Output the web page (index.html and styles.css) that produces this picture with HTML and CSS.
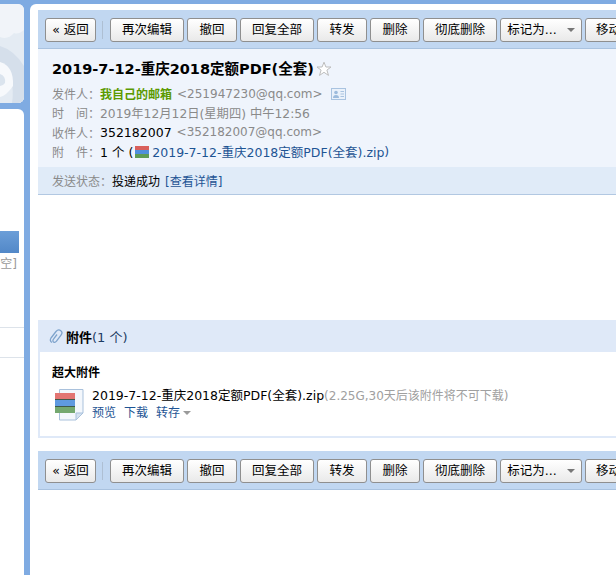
FILE: index.html
```html
<!DOCTYPE html>
<html lang="zh">
<head>
<meta charset="utf-8">
<title>邮件</title>
<link rel="stylesheet" href="styles.css">
</head>
<body>
<div class="app">
  <aside class="side">
    <div class="side-top">
      <svg class="swirl" viewBox="0 0 24 99" width="24" height="99" aria-hidden="true">
        <rect width="24" height="99" fill="#f1f4f9"/>
        <path d="M0 33 Q8 36 14 29 Q18 31 24 26 L24 99 L0 99Z" fill="#e4ebf3"/>
        <path d="M0 42 Q14 46 24 62 L24 99 L12 99 Q16 74 0 58Z" fill="#d5dfeb"/>
        <path d="M0 58 Q14 62 13 82 Q6 92 0 93Z" fill="#f7f9fc"/>
        <path d="M0 70 Q6 72 5 79 Q3 82 0 82Z" fill="#dbe4ee"/>
      </svg>
    </div>
    <div class="side-main">
      <div class="side-active"></div>
      <div class="side-clear">[清空]</div>
      <div class="side-line first"></div>
      <div class="side-line"></div>
    </div>
  </aside>
  <main class="main">
    <div class="toolbar">
      <button class="btn back">« 返回</button>
      <span class="sep"></span>
      <button class="btn w74">再次编辑</button>
      <button class="btn w50">撤回</button>
      <button class="btn w74">回复全部</button>
      <button class="btn w50">转发</button>
      <button class="btn w50">删除</button>
      <button class="btn w74">彻底删除</button>
      <button class="btn mark">标记为...<i class="caret"></i></button>
      <button class="btn move">移动到...</button>
    </div>
    <header class="head">
      <h1 class="title">2019-7-12-重庆2018定额PDF(全套)<svg class="star" viewBox="0 0 16 16" width="16" height="16" aria-hidden="true"><path d="M8 1.2 9.9 6H15l-4.100 3.100 1.600 5.300L8 11.300l-4.500 3.100 1.600-5.300L1 6h5.100Z" fill="#fff" stroke="#bcbcbc"/></svg></h1>
      <div class="meta"><span class="label">发件人：</span><b class="sender">我自己的邮箱</b><span class="addr">&lt;251947230@qq.com&gt;</span><svg class="card" viewBox="0 0 15 12" width="15" height="12" aria-hidden="true"><rect x=".5" y=".5" width="14" height="11" fill="#eaf1fa" stroke="#a9c3e0"/><circle cx="5" cy="4.500" r="1.800" fill="#9dbbdc"/><path d="M2 10c0-2 1-3 3-3s3 1 3 3Z" fill="#9dbbdc"/><path d="M9.500 3.500h3.500M9.500 6h3.500M9.500 8.500h3.500" stroke="#a9c3e0"/></svg></div>
      <div class="meta"><span class="label">时　间：</span><span class="muted">2019年12月12日(星期四) 中午12:56</span></div>
      <div class="meta"><span class="label">收件人：</span><span class="strong">352182007</span><span class="addr">&lt;352182007@qq.com&gt;</span></div>
      <div class="meta"><span class="label">附　件：</span><span class="strong">1 个 (</span><svg class="zip-mini" viewBox="0 0 14 12" width="14" height="12" aria-hidden="true"><rect width="14" height="4" fill="#d9605c"/><rect y="4" width="14" height="4" fill="#4f8fdc"/><rect y="8" width="14" height="4" fill="#5e9c56"/></svg><a class="link">2019-7-12-重庆2018定额PDF(全套).zip</a><span class="muted-dark">)</span></div>
    </header>
    <div class="status"><span class="label">发送状态：</span><span class="state">投递成功</span><a class="link detail">[查看详情]</a></div>
    <div class="body"></div>
    <section class="att">
      <div class="att-head"><svg class="clip" viewBox="0 0 14 15" width="14" height="15" aria-hidden="true"><path d="M3 13.500c-2-1-2-3-1-4.500l5-6.500c1.500-1.700 3.500-1.800 4.800-.8s1.500 2.800.2 4.500l-4.500 6c-1 1.200-2.200 1.300-3 .7s-.8-1.800 0-2.800l3.500-4.600" fill="none" stroke="#7ea3cc" stroke-width="1.300"/></svg><b>附件</b><span>(1 个)</span></div>
      <div class="att-box">
        <div class="att-type">超大附件</div>
        <div class="att-file">
          <svg class="zip" viewBox="0 0 29 32" width="29" height="32" aria-hidden="true">
            <path d="M4.500.5h23.500v23.500l-7 7H4.500Z" fill="#f3f7fc" stroke="#a9c1dc"/>
            <path d="M28 24h-7v7Z" fill="#d5e2f0" stroke="#a9c1dc"/>
            <rect x="0" y="4" width="20" height="6" fill="#e27572"/>
            <rect x="0" y="10" width="20" height="1" fill="#3f5a4a"/>
            <rect x="0" y="11" width="20" height="6" fill="#5f9ae0"/>
            <rect x="0" y="17" width="20" height="1" fill="#3f5a4a"/>
            <rect x="0" y="18" width="20" height="6" fill="#74a86f"/>
          </svg>
          <div class="att-info">
            <div class="att-name">2019-7-12-重庆2018定额PDF(全套).zip<span class="att-note">(2.25G,30天后该附件将不可下载)</span></div>
            <div class="att-links"><a class="link">预览</a><a class="link">下载</a><a class="link">转存<i class="caret small"></i></a></div>
          </div>
        </div>
      </div>
    </section>
    <div class="toolbar lower">
      <button class="btn back">« 返回</button>
      <span class="sep"></span>
      <button class="btn w74">再次编辑</button>
      <button class="btn w50">撤回</button>
      <button class="btn w74">回复全部</button>
      <button class="btn w50">转发</button>
      <button class="btn w50">删除</button>
      <button class="btn w74">彻底删除</button>
      <button class="btn mark">标记为...<i class="caret"></i></button>
      <button class="btn move">移动到...</button>
    </div>
  </main>
</div>
</body>
</html>
```

FILE: styles.css
```css
* { box-sizing: border-box; }
html, body { margin: 0; height: 575px; overflow: hidden; }
body {
  background: #7fabe2;
  font-family: "DejaVu Sans", "Noto Sans CJK SC", sans-serif;
  font-size: 12.500px;
  color: #000;
}
.app { display: flex; height: 575px; padding-top: 4px; overflow: hidden; }
.side { width: 24px; flex: none; display: flex; flex-direction: column; gap: 6px; }
.side-top { height: 99px; overflow: hidden; border-radius: 0 6px 6px 0; background: #f1f4f9; }
.swirl { display: block; }
.side-main { flex: 1; background: #fff; border-radius: 0 6px 0 0; padding-top: 122px; overflow: hidden; }
.side-active { width: 19px; height: 22px; background: linear-gradient(#6b9ed8, #5288c8); }
.side-clear { direction: rtl; width: 17px; margin-top: 3px; height: 16px; white-space: nowrap; color: #9a9a9a; overflow: hidden; font-size: 12px; line-height: 16px; }
.side-line { height: 1px; background: #dde3ea; margin-top: 29px; }
.side-line.first { margin-top: 55px; }

.main { flex: 1; min-width: 0; margin-left: 6px; background: #fff; border-radius: 6px 0 0 0; padding: 6px 0 0 8px; overflow: hidden; }
.toolbar { display: flex; align-items: center; height: 39px; padding: 1px 0 0 7px; gap: 3px; background: #c1d7f1; border-bottom: 1px solid #a9c2df; overflow: hidden; }
.lower { margin-top: 13px; }
.btn {
  flex: none; height: 24px; padding: 1px 0 0; border: 1px solid #8f8f8f; border-radius: 3px;
  background: linear-gradient(#fff, #e9e9e9);
  font: inherit; font-size: 12.500px; color: #000; white-space: nowrap; line-height: 20px;
}
.back { width: 51px; }
.sep { width: 2px; height: 18px; margin: 0 4px 0 3px; background: #dbe6f3; border-left: 1px solid #aebfd3; }
.w74 { width: 74px; }
.w50 { width: 50px; }
.mark { width: 82px; }
.move { width: 74px; text-align: left; padding-left: 10px; }
.caret { display: inline-block; width: 0; height: 0; margin-left: 10px; vertical-align: 2px; border: 4px solid transparent; border-top: 4px solid #777; border-bottom: 0; }
.caret.small { margin-left: 3px; border-top-color: #9a9a9a; }

.head { background: #eff4fc; padding: 10px 0 6px 14px; height: 118px; }
.title { margin: 0 0 5px; display: flex; align-items: center; font-size: 14.500px; line-height: 20px; font-weight: 700; white-space: nowrap; }
.star { margin-left: 2px; }
.meta { display: flex; align-items: center; height: 19.300px; white-space: nowrap; }
.label { color: #8a8a8a; font-size: 12px; }
.sender { color: #5b9a00; font-weight: 700; font-size: 12px; }
.addr { color: #8a8a8a; margin-left: 5px; font-size: 12px; }
.card { margin-left: 8px; }
.muted { color: #8a8a8a; font-size: 12.300px; }
.muted-dark { color: #1e5494; }
.strong { color: #000; }
.zip-mini { margin: 0 3px 0 2px; }
.link { color: #1e5494; }
.status { display: flex; align-items: center; height: 28px; padding-left: 14px; background: #e0ebf8; border-bottom: 1px solid #b2c8e2; white-space: nowrap; font-size: 12px; }
.state { color: #000; }
.detail { margin-left: 5px; }
.body { height: 125px; }

.att { height: 118px; border: solid #dfe9f8; border-width: 0 0 2px 2px; }
.att-head { display: flex; align-items: center; height: 32px; margin-left: -2px; padding: 1px 0 0 11px; background: #dfe9f8; white-space: nowrap; font-size: 13px; }
.att-head b { margin-left: 3px; }
.att-head span { color: #1e3c64; }
.att-box { padding: 14px 0 0 12px; }
.att-type { font-size: 12px; font-weight: 700; line-height: 14px; white-space: nowrap; }
.att-file { display: flex; margin-top: 7px; margin-left: 3px; white-space: nowrap; }
.zip { flex: none; margin-top: 2px; }
.att-info { margin-left: 8px; }
.att-name { line-height: 17px; }
.att-note { color: #a0a0a0; font-size: 12px; }
.att-links { display: flex; gap: 8px; line-height: 17px; font-size: 12px; }
```
